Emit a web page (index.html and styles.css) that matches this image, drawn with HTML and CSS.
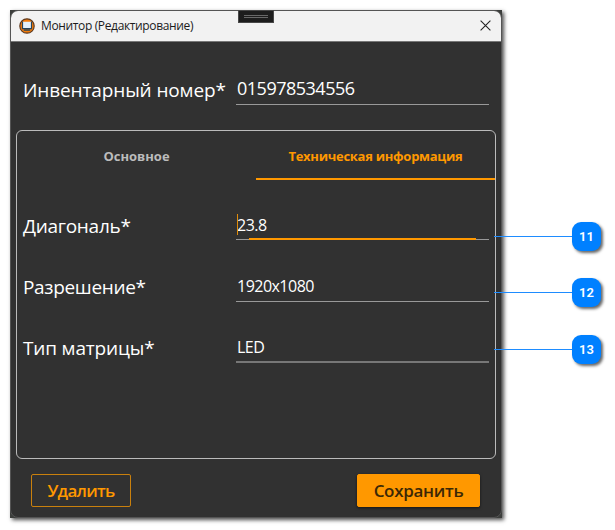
FILE: index.html
```html
<!DOCTYPE html>
<html lang="ru">
<head>
<meta charset="utf-8">
<title>Монитор (Редактирование)</title>
<link rel="stylesheet" href="styles.css">
</head>
<body>
<main class="window">
  <div class="grip"><i></i><i></i></div>
  <div class="frame">
    <header class="titlebar">
      <svg class="app-icon" viewBox="0 0 16 16"><circle cx="8" cy="8" r="7.2" fill="#f57c0a" stroke="#5d3a20" stroke-width="1.2"/><path d="M3.8 3.8h8.4v6.4H3.8z" fill="#e4f1fb"/><path d="M3.5 3.6v7h9v-7M4.8 12.2h6.4" fill="none" stroke="#26455c" stroke-width="1.2"/></svg>
      <h1 class="title">Монитор (Редактирование)</h1>
      <svg class="close" viewBox="0 0 11 11"><path d="M.6.6l9.8 9.8M10.4.6L.6 10.4" stroke="#222" stroke-width="1.1"/></svg>
    </header>
    <div class="row number">
      <span class="label l-number">Инвентарный номер*</span>
      <span class="field big">015978534556</span>
    </div>
    <section class="panel">
      <nav class="tabs">
        <span class="tab t-main">Основное</span>
        <span class="tab active">Техническая информация</span>
      </nav>
      <div class="row r1">
        <span class="label l-diag">Диагональ*</span>
        <span class="field focus">23.8</span>
      </div>
      <div class="row r2">
        <span class="label l-res">Разрешение*</span>
        <span class="field f-res">1920x1080</span>
      </div>
      <div class="row r3">
        <span class="label l-type">Тип матрицы*</span>
        <span class="field thick">LED</span>
      </div>
    </section>
    <footer class="actions">
      <button class="btn delete">Удалить</button>
      <button class="btn save">Сохранить</button>
    </footer>
  </div>
</main>
<aside class="callouts">
  <div class="callout"><b>11</b></div>
  <div class="callout"><b>12</b></div>
  <div class="callout"><b>13</b></div>
</aside>
</body>
</html>
```
FILE: styles.css
```css
* { box-sizing: border-box; }
body {
  margin: 0;
  padding: 10px;
  width: 615px;
  height: 530px;
  background: #fff;
  font-family: "Open Sans", "Noto Sans", sans-serif;
  overflow: hidden;
  position: relative;
}
.window {
  position: relative;
  width: 492px;
  height: 508px;
  background: #3c3e3c;
  box-shadow: 2px 2px 4px rgba(0, 0, 0, .7);
}
.frame {
  height: 508px;
  border: 1px solid #555;
  border-radius: 8px;
  background: #313131;
  overflow: hidden;
}
.grip {
  position: absolute;
  left: 228px;
  top: 0;
  width: 36px;
  height: 13px;
  padding: 4px 5px 0;
  background: #1d1d1d;
  border: 1px solid #484848;
}
.grip i { display: block; height: 1px; margin-bottom: 1px; background: #686868; }
.titlebar {
  display: flex;
  align-items: center;
  height: 31px;
  padding: 0 10px 1px 8px;
  background: #f2f2f2;
  border-bottom: 1px solid #777;
}
.app-icon { width: 16px; height: 16px; }
.title {
  margin: 0 auto 0 6px;
  font-size: 12px;
  font-weight: 400;
  line-height: 16px;
  letter-spacing: -.36px;
  color: #1b1b1b;
}
.close { width: 11px; height: 11px; }
.row {
  display: grid;
  grid-template-columns: 213px 253px;
  color: #fff;
}
.number { height: 63px; padding-left: 12px; align-items: end; }
.panel .row { height: 61px; padding-left: 6px; align-items: end; }
.panel .r1 { height: 60px; }
.label {
  font-size: 19px;
  line-height: 27px;
  white-space: nowrap;
}
.l-number { letter-spacing: -.12px; padding-bottom: 1px; }
.l-diag { letter-spacing: -.28px; }
.l-res { letter-spacing: -.32px; }
.l-type { letter-spacing: -.16px; }
.field {
  position: relative;
  height: 30px;
  padding-left: 1px;
  border-bottom: 1px solid #999;
  font-size: 16px;
  line-height: 30px;
  letter-spacing: -.52px;
}
.big { font-size: 18px; line-height: 27px; letter-spacing: -.5px; }
.f-res { height: 31px; margin-bottom: -1px; }
.thick { height: 31px; border-bottom: 2px solid #777; margin-bottom: -1px; line-height: 31px; }
.focus::before {
  content: "";
  position: absolute;
  left: 1px;
  top: 4px;
  width: 1px;
  height: 21px;
  background: #e08c0a;
}
.focus::after {
  content: "";
  position: absolute;
  left: 13px;
  right: 13px;
  bottom: -1px;
  height: 2px;
  background: #ff9800;
}
.panel {
  width: 480px;
  height: 329px;
  margin: 25px 0 0 5px;
  border: 1px solid #bbb;
  border-radius: 6px;
}
.tabs { display: grid; grid-template-columns: 1fr 1fr; height: 49px; }
.tab {
  display: flex;
  align-items: center;
  justify-content: center;
  padding-top: 3px;
  border-bottom: 2px solid transparent;
  font-size: 13px;
  font-weight: 700;
  color: #bcbcbc;
  white-space: nowrap;
}
.tab.active { letter-spacing: -.28px; color: #ff9800; border-color: #ff9800; }
.actions {
  display: flex;
  justify-content: space-between;
  padding: 15px 21px 0 20px;
}
.btn {
  height: 33px;
  padding: 0;
  border: 1px solid #ff9800;
  border-radius: 2px;
  font: 600 17px/31px "Open Sans", "Noto Sans", sans-serif;
}
.delete { width: 100px; background: transparent; border-color: #c9800d; color: #ff9800; letter-spacing: -.7px; }
.save { width: 123px; background: #ff9800; color: #3b2806; box-shadow: 0 1px 3px rgba(0, 0, 0, .6); letter-spacing: -.3px; }
.callouts {
  position: absolute;
  left: 494px;
  top: 222px;
  display: grid;
  grid-auto-rows: 28px;
  row-gap: 28.5px;
  width: 107px;
}
.callout { display: flex; align-items: center; }
.callout::before { content: ""; flex: 1; height: 1px; background: #1e8cff; }
.callout b {
  width: 29px;
  height: 29px;
  border-radius: 9px;
  background: #0080ff;
  box-shadow: 2px 2px 3px rgba(0, 0, 0, .6);
  color: #fff;
  font: 600 13px/29px Roboto, sans-serif;
  text-align: center;
}
```
